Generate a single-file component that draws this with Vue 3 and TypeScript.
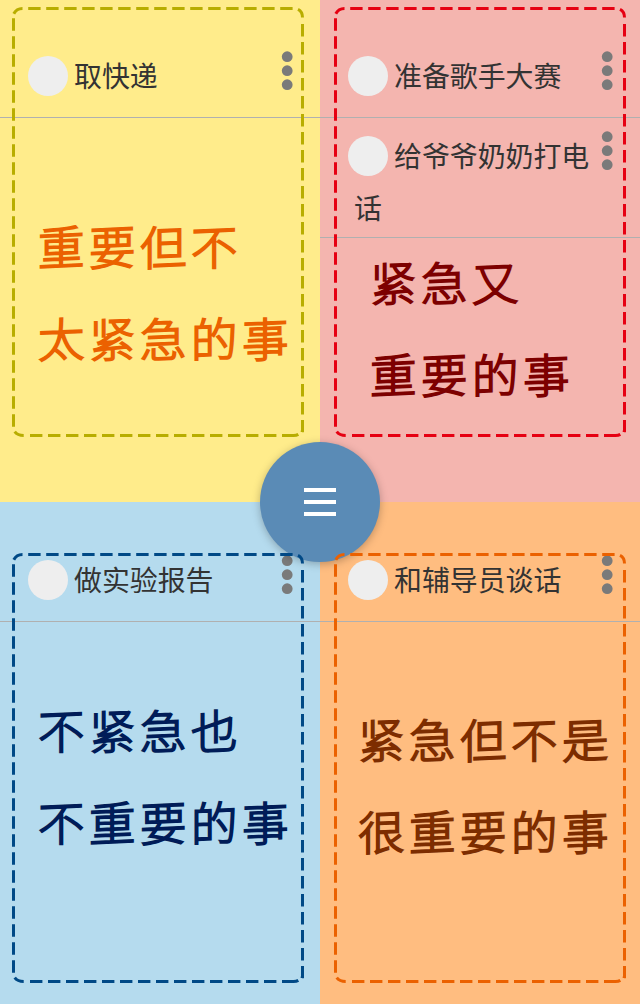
<script setup lang="ts">
interface Quadrant {
  id: string
  tasks: string[]
  caption: string[]
}

const quadrants: Quadrant[] = [
  { id: 'calm', tasks: ['取快递'], caption: ['重要但不', '太紧急的事'] },
  { id: 'critical', tasks: ['准备歌手大赛', '给爷爷奶奶打电话'], caption: ['紧急又', '重要的事'] },
  { id: 'idle', tasks: ['做实验报告'], caption: ['不紧急也', '不重要的事'] },
  { id: 'urgent', tasks: ['和辅导员谈话'], caption: ['紧急但不是', '很重要的事'] },
]
</script>

<template>
  <main class="board">
    <section v-for="q in quadrants" :key="q.id" class="quadrant" :class="q.id">
      <ul class="tasks">
        <li v-for="task in q.tasks" :key="task" class="task">
          <p class="title"><span class="check"></span>{{ task }}</p>
          <svg class="more" width="12" height="40" viewBox="0 0 12 40">
            <circle cx="6.2" cy="5.7" r="5.4" />
            <circle cx="6.2" cy="19.7" r="5.4" />
            <circle cx="6.2" cy="33.7" r="5.4" />
          </svg>
        </li>
      </ul>
      <div class="overlay">
        <svg class="frame" width="292" height="430" viewBox="12 7 292 430">
          <g class="dashes">
            <path d="M28.2 8.5H293" />
            <path d="M302.5 24V432" />
            <path d="M30 435.5H294" />
            <path d="M13.5 18.3V427" />
          </g>
          <path d="M13.8 13.8Q16.5 8.5 22.5 8.5" />
          <path d="M298 9.3Q302.5 11.5 302.5 17.5" />
          <path d="M302.5 426V430L302 432.2" />
          <path d="M290 435.5H293.5Q296.5 435.5 298.3 434.4" />
          <path d="M14.7 431.7Q17.5 435.5 23.7 435.5" />
        </svg>
        <div class="caption">
          <p v-for="line in q.caption" :key="line">
            <span v-for="(ch, i) in line" :key="i">{{ ch }}</span>
          </p>
        </div>
      </div>
    </section>
    <button class="menu" type="button">
      <i></i><i></i><i></i>
    </button>
  </main>
</template>

<style>
body {
  margin: 0;
}
</style>

<style scoped>
.board {
  position: relative;
  display: grid;
  grid-template: 502px 502px / 320px 320px;
  width: 640px;
  height: 1004px;
  overflow: hidden;
  font-family: "Noto Sans CJK SC", sans-serif;
}
.quadrant {
  position: relative;
  box-sizing: border-box;
  padding-top: 38px;
}
.calm { background: #ffec8b; --frame: #b8ad00; --ink: #eb6100; --top: 7px; --left: 12px; --text-top: 199px; --text-left: 38px; }
.critical { background: #f4b5af; --frame: #e60012; --ink: #7d0000; --top: 7px; --left: 14px; --text-top: 235px; --text-left: 50px; }
.idle { background: #b5dbee; --frame: #004986; --ink: #001c58; --top: 51px; --left: 12px; --text-top: 181px; --text-left: 38px; }
.urgent { background: #ffbd80; --frame: #eb6100; --ink: #7d2d00; --top: 51px; --left: 14px; --text-top: 190px; --text-left: 38px; }
.idle,
.urgent {
  padding-top: 40px;
}
.tasks {
  list-style: none;
  margin: 0;
  padding: 0;
}
.task {
  display: flex;
  justify-content: space-between;
  align-items: flex-start;
  box-sizing: border-box;
  min-height: 80px;
  padding: 11px 27px 4px 34px;
  border-bottom: 1px solid #b0b0b0;
}
.title {
  width: 240px;
  margin: 0;
  color: #333;
  font-size: 27.9px;
  line-height: 52px;
}
.check {
  float: left;
  width: 40px;
  height: 40px;
  margin: 7px 6px 0 -6px;
  border-radius: 50%;
  background: #eee;
}
.more {
  flex: none;
  margin-top: 2px;
  fill: #7a7a7a;
}
.overlay {
  position: absolute;
  inset: 0;
  z-index: 2;
  pointer-events: none;
}
.frame {
  position: absolute;
  top: var(--top);
  left: var(--left);
  fill: none;
  stroke: var(--frame);
  stroke-width: 3;
}
.dashes {
  stroke-dasharray: 12.4 5.6;
}
.caption {
  position: absolute;
  top: var(--text-top);
  left: var(--text-left);
  color: var(--ink);
  font-size: 46.5px;
  font-weight: 300;
  -webkit-text-stroke: 1.8px var(--ink);
  stroke-linejoin: round;
  white-space: nowrap;
}
.caption p {
  display: flex;
  gap: 3px;
  margin: 0;
  line-height: 92px;
}
.caption span {
  display: block;
  width: 48px;
  transform: skewY(-2.5deg);
}
.menu {
  position: absolute;
  top: 442px;
  left: 260px;
  z-index: 1;
  display: flex;
  flex-direction: column;
  align-items: center;
  justify-content: center;
  gap: 8px;
  width: 120px;
  height: 120px;
  padding: 0;
  border: 0;
  border-radius: 50%;
  background: #5a8bb6;
  box-shadow: 0 2px 8px rgba(0, 0, 0, 0.26);
}
.menu i {
  width: 32px;
  height: 4px;
  background: #fff;
}
</style>
